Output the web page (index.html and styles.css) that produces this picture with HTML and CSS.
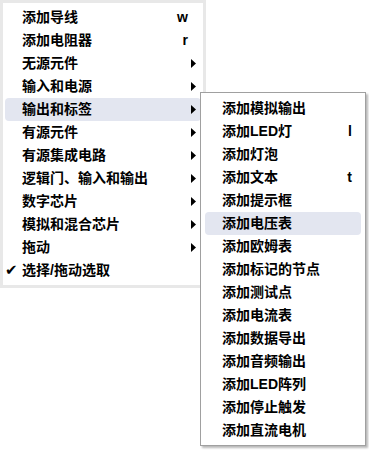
FILE: index.html
```html
<!DOCTYPE html>
<html lang="zh">
<head>
<meta charset="utf-8">
<link rel="stylesheet" href="styles.css">
</head>
<body>
<div class="stage">
  <div class="menu main">
    <div class="item"><span class="chk"></span><span class="lbl">添加导线</span><span class="key">w</span><span class="arr"></span></div>
    <div class="item"><span class="chk"></span><span class="lbl">添加电阻器</span><span class="key">r</span><span class="arr"></span></div>
    <div class="item"><span class="chk"></span><span class="lbl">无源元件</span><span class="key"></span><span class="arr"><svg width="5" height="9" viewBox="0 0 5 9"><polygon points="0,0 5,4.5 0,9" fill="#000"/></svg></span></div>
    <div class="item"><span class="chk"></span><span class="lbl">输入和电源</span><span class="key"></span><span class="arr"><svg width="5" height="9" viewBox="0 0 5 9"><polygon points="0,0 5,4.5 0,9" fill="#000"/></svg></span></div>
    <div class="item hl"><span class="chk"></span><span class="lbl">输出和标签</span><span class="key"></span><span class="arr"><svg width="5" height="9" viewBox="0 0 5 9"><polygon points="0,0 5,4.5 0,9" fill="#000"/></svg></span></div>
    <div class="item"><span class="chk"></span><span class="lbl">有源元件</span><span class="key"></span><span class="arr"><svg width="5" height="9" viewBox="0 0 5 9"><polygon points="0,0 5,4.5 0,9" fill="#000"/></svg></span></div>
    <div class="item"><span class="chk"></span><span class="lbl">有源集成电路</span><span class="key"></span><span class="arr"><svg width="5" height="9" viewBox="0 0 5 9"><polygon points="0,0 5,4.5 0,9" fill="#000"/></svg></span></div>
    <div class="item"><span class="chk"></span><span class="lbl">逻辑门、输入和输出</span><span class="key"></span><span class="arr"><svg width="5" height="9" viewBox="0 0 5 9"><polygon points="0,0 5,4.5 0,9" fill="#000"/></svg></span></div>
    <div class="item"><span class="chk"></span><span class="lbl">数字芯片</span><span class="key"></span><span class="arr"><svg width="5" height="9" viewBox="0 0 5 9"><polygon points="0,0 5,4.5 0,9" fill="#000"/></svg></span></div>
    <div class="item"><span class="chk"></span><span class="lbl">模拟和混合芯片</span><span class="key"></span><span class="arr"><svg width="5" height="9" viewBox="0 0 5 9"><polygon points="0,0 5,4.5 0,9" fill="#000"/></svg></span></div>
    <div class="item"><span class="chk"></span><span class="lbl">拖动</span><span class="key"></span><span class="arr"><svg width="5" height="9" viewBox="0 0 5 9"><polygon points="0,0 5,4.5 0,9" fill="#000"/></svg></span></div>
    <div class="item"><span class="chk">✔</span><span class="lbl">选择/拖动选取</span><span class="key"></span><span class="arr"></span></div>
  </div>
  <div class="menu sub">
    <div class="item"><span class="lbl">添加模拟输出</span><span class="key"></span></div>
    <div class="item"><span class="lbl">添加LED灯</span><span class="key">l</span></div>
    <div class="item"><span class="lbl">添加灯泡</span><span class="key"></span></div>
    <div class="item"><span class="lbl">添加文本</span><span class="key">t</span></div>
    <div class="item"><span class="lbl">添加提示框</span><span class="key"></span></div>
    <div class="item hl"><span class="lbl">添加电压表</span><span class="key"></span></div>
    <div class="item"><span class="lbl">添加欧姆表</span><span class="key"></span></div>
    <div class="item"><span class="lbl">添加标记的节点</span><span class="key"></span></div>
    <div class="item"><span class="lbl">添加测试点</span><span class="key"></span></div>
    <div class="item"><span class="lbl">添加电流表</span><span class="key"></span></div>
    <div class="item"><span class="lbl">添加数据导出</span><span class="key"></span></div>
    <div class="item"><span class="lbl">添加音频输出</span><span class="key"></span></div>
    <div class="item"><span class="lbl">添加LED阵列</span><span class="key"></span></div>
    <div class="item"><span class="lbl">添加停止触发</span><span class="key"></span></div>
    <div class="item"><span class="lbl">添加直流电机</span><span class="key"></span></div>
  </div>
</div>
</body>
</html>
```

FILE: styles.css
```css
html, body {
  margin: 0;
  padding: 0;
  background: #ffffff;
}
body {
  font-family: "Liberation Sans", "Noto Sans CJK SC", sans-serif;
  font-size: 14px;
  font-weight: bold;
  color: #000;
}
.stage {
  position: relative;
  width: 369px;
  height: 450px;
  overflow: hidden;
}
.menu {
  display: flex;
  flex-direction: column;
  background: #fff;
  box-sizing: border-box;
}
.main {
  width: 206px;
  border: 3px solid #e8e8e8;
  padding: 3px 0;
}
.item {
  display: flex;
  align-items: center;
  height: 23px;
  line-height: 23px;
  white-space: nowrap;
  border-radius: 4px;
}
.main .item {
  margin: 0 2px;
}
.hl {
  background: #e3e6f0;
}
.chk {
  width: 17px;
  flex: none;
  padding-left: 0;
  box-sizing: border-box;
  font-family: "DejaVu Sans", sans-serif;
  font-size: 15px;
}
.lbl {
  flex: 1;
}
.key {
  flex: none;
}
.arr {
  width: 13px;
  flex: none;
  display: flex;
  align-items: center;
  padding-left: 3px;
  box-sizing: border-box;
  height: 23px;
}
.sub {
  position: absolute;
  left: 200px;
  top: 92px;
  width: 166px;
  border: 1px solid #a0a0a0;
  padding: 4px 4px 3px;
  box-shadow: 2px 2px 2px rgba(0, 0, 0, 0.28);
}
.sub .item {
  padding: 0 9px 0 17px;
}
```
